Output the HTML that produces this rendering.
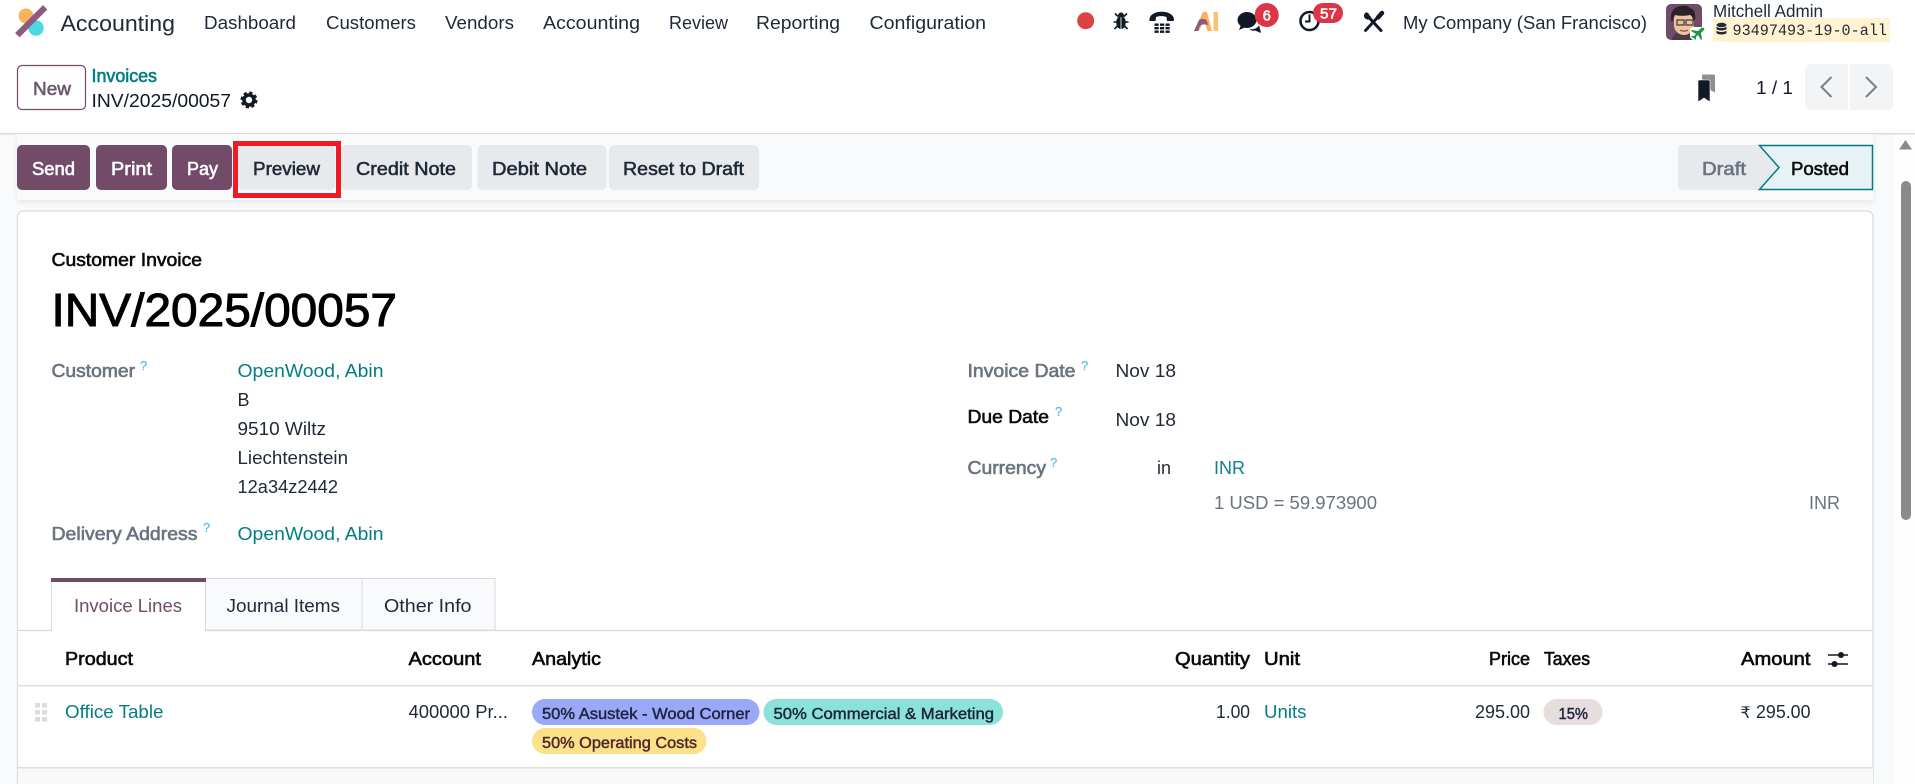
<!DOCTYPE html>
<html lang="en">
<head>
<meta charset="utf-8">
<title>INV/2025/00057</title>
<style>
html,body{margin:0;padding:0;width:1915px;height:784px;overflow:hidden;background:#fff}
svg{display:block}
text{font-family:"Liberation Sans","DejaVu Sans",sans-serif;font-size:18px;fill:currentColor;color:#1f2937}
.nav{font-size:18.5px;color:#1f2937}
.b{stroke:currentColor;stroke-width:.6}
.teal{color:#017e84}
.lab{color:#6b7280;stroke:currentColor;stroke-width:.6}
.q{font-size:13px;color:#5fb8e8;stroke:currentColor;stroke-width:.2}
.btn{color:#fff;stroke:currentColor;stroke-width:.6}
.sec{color:#1f2937;stroke:currentColor;stroke-width:.55}
.th{color:#0b0b0b;stroke:currentColor;stroke-width:.6}
.tag{font-size:16px;color:#1f2540;stroke:currentColor;stroke-width:.45}
</style>
</head>
<body>
<svg width="1915" height="784" viewBox="0 0 1915 784" xmlns="http://www.w3.org/2000/svg">
<defs>
<filter id="sh" x="-2%" y="-20%" width="104%" height="150%"><feDropShadow dx="0" dy="2" stdDeviation="3" flood-color="#000" flood-opacity=".08"/></filter>
</defs>

<!-- backgrounds -->
<rect x="0" y="0" width="1915" height="784" fill="#fff"/>
<rect x="0" y="134" width="1895" height="650" fill="#f9fafb"/>
<rect x="1895" y="134" width="20" height="650" fill="#fefefe"/>
<rect x="0" y="133" width="1915" height="1.5" fill="#d8dadd"/>

<!-- logo -->
<circle cx="26" cy="16" r="7.5" fill="#f9b35c"/>
<circle cx="36" cy="28" r="7.7" fill="#4dd8e6"/>
<path d="M19.500 33 L43 9.500" stroke="#8c5c80" stroke-width="6.200" stroke-linecap="square"/>

<!-- nav -->
<text x="60.500" y="31" textLength="114.500" lengthAdjust="spacingAndGlyphs" style="font-size:22.500px">Accounting</text>
<text class="nav" x="204" y="29" textLength="92" lengthAdjust="spacingAndGlyphs">Dashboard</text>
<text class="nav" x="326" y="29" textLength="90" lengthAdjust="spacingAndGlyphs">Customers</text>
<text class="nav" x="445" y="29" textLength="69" lengthAdjust="spacingAndGlyphs">Vendors</text>
<text class="nav" x="543" y="29" textLength="97" lengthAdjust="spacingAndGlyphs">Accounting</text>
<text class="nav" x="669" y="29" textLength="59" lengthAdjust="spacingAndGlyphs">Review</text>
<text class="nav" x="756" y="29" textLength="84" lengthAdjust="spacingAndGlyphs">Reporting</text>
<text class="nav" x="869.500" y="29" textLength="116.500" lengthAdjust="spacingAndGlyphs">Configuration</text>

<!-- systray -->
<circle cx="1085.700" cy="20.700" r="8.500" fill="#dc4343"/>
<!-- bug -->
<g fill="#111827" stroke="#111827">
<ellipse cx="1121" cy="22.500" rx="4.800" ry="6.500" stroke="none"/>
<circle cx="1121" cy="15.500" r="3" stroke="none"/>
<path d="M1115 13.500l3 3M1127 13.500l-3 3M1113.500 22h4M1128.500 22h-4M1114.500 29l3-3M1127.500 29l-3-3" fill="none" stroke-width="1.600"/>
<path d="M1121 17v12" stroke="#fff" stroke-width=".8"/>
</g>
<!-- phone -->
<path d="M1149.500 20c-.5-11 25-11 24.500 0l-.5 1h-6.500l-.5-4c-3-1.200-7.500-1.200-10.500 0l-.5 4h-6z" fill="#111827"/>
<g fill="#111827">
<rect x="1154.500" y="23.500" width="4.200" height="2.400"/><rect x="1160" y="23.500" width="4.200" height="2.400"/><rect x="1165.500" y="23.500" width="4.200" height="2.400"/>
<rect x="1154.500" y="27" width="4.200" height="2.400"/><rect x="1160" y="27" width="4.200" height="2.400"/><rect x="1165.500" y="27" width="4.200" height="2.400"/>
<rect x="1154.500" y="30.500" width="4.200" height="2.400"/><rect x="1160" y="30.500" width="4.200" height="2.400"/><rect x="1165.500" y="30.500" width="4.200" height="2.400"/>
</g>
<!-- AI -->
<path d="M1194 31l9-19h4l5 19h-4.500l-3.500-11-5 11z" fill="#f9b35c"/>
<path d="M1194 31l5-11c3-2 7-1 8 1l1 4c-3-1-6-1-8 1l-2 5z" fill="#8c5c80"/>
<rect x="1213.500" y="12" width="4.500" height="19" fill="#fbc26e"/>
<!-- chat -->
<ellipse cx="1247" cy="20" rx="9.500" ry="8" fill="#111827"/>
<path d="M1241 25l-2 5 7-3z" fill="#111827"/>
<path d="M1249 29c5 1 9-1 10-4l2 8-6-2.500c-2 .5-4 0-6-1.500z" fill="#111827"/>
<circle cx="1266.700" cy="15" r="12" fill="#dc3545"/>
<text x="1262.700" y="20.500" class="b" style="font-size:14.500px;color:#fff">6</text>
<!-- clock -->
<circle cx="1309.500" cy="21" r="9" fill="none" stroke="#111827" stroke-width="2.600"/>
<path d="M1309.500 14.500V21.500H1305" fill="none" stroke="#111827" stroke-width="2"/>
<rect x="1313" y="3" width="30" height="20" rx="10" fill="#dc3545"/>
<text x="1320" y="18.500" class="b" textLength="17" lengthAdjust="spacingAndGlyphs" style="font-size:14.500px;color:#fff">57</text>
<!-- tools -->
<path d="M1377 18l-11.500 12.500" stroke="#111827" stroke-width="2.800" stroke-linecap="round"/>
<path d="M1378 17.500l4-4.500" stroke="#111827" stroke-width="4.500" stroke-linecap="round"/>
<path d="M1369 17.500l12 13" stroke="#111827" stroke-width="3" stroke-linecap="round"/>
<path d="M1366.500 12.500c-2 .8-2.800 3.200-1.800 5 1 1.600 3 2.200 4.600 1.500l1-2.500-2-2 .5-.5z" fill="#111827" stroke="#111827" stroke-width=".6"/>

<text class="nav" x="1403" y="29" textLength="244" lengthAdjust="spacingAndGlyphs">My Company (San Francisco)</text>

<!-- avatar -->
<rect x="1666" y="4" width="36" height="36" rx="5" fill="#6f4d68"/>
<path d="M1672 40c0-5 4-7 8-8l10 0c4 1 8 3 8 8z" fill="#4a3a4a"/>
<path d="M1674 20c0-7 4-10 10-10s10 3 10 10v5c0 6-5 10-10 10s-10-4-10-10z" fill="#edc3a0"/>
<path d="M1671 21c-1-9 3-15 11-15 4-1 6 0 8 2 4 1 6 5 5 12l-2 1c0-3-1-5-3-6-5 1-11 1-15 0-1 1-2 3-2 6z" fill="#2a2226"/>
<rect x="1677" y="20" width="7" height="5" fill="none" stroke="#444" stroke-width="1.300"/>
<rect x="1686" y="20" width="7" height="5" fill="none" stroke="#444" stroke-width="1.300"/>
<path d="M1680 30c2 1.500 6 1.500 8 0" stroke="#8a4a40" stroke-width="1.200" fill="none"/>
<rect x="1690" y="27" width="15" height="13" rx="4" fill="#fff"/>
<path d="M1704 28c-1-1-3 0-4 1l-2 2-6-1-1 1 5 3-2 2-2 0-1 1 3 1 1 2 1-1 0-2 2-2 3 5 1-1-1-6 2-2c1-1 2-2 1-3z" fill="#1d9a3f"/>

<text x="1713" y="17" textLength="110" lengthAdjust="spacingAndGlyphs" style="font-size:17.500px">Mitchell Admin</text>
<rect x="1713" y="18" width="177" height="24" fill="#fff3d1"/>
<g fill="#1f2937">
<ellipse cx="1721.500" cy="25" rx="5" ry="2.200"/>
<path d="M1716.500 26.500c1.500 2 8.500 2 10 0v2.500c-1.500 2-8.500 2-10 0zM1716.500 30.500c1.500 2 8.500 2 10 0v2.500c-1.500 2-8.500 2-10 0z"/>
</g>
<text x="1732.500" y="35" textLength="154.500" lengthAdjust="spacingAndGlyphs" style="font-family:'Liberation Mono',monospace;font-size:16px">93497493-19-0-all</text>

<!-- control panel -->
<rect x="17.500" y="65.500" width="68" height="44" rx="4.500" fill="#fff" stroke="#714b67" stroke-width="1.200"/>
<text x="33" y="95" class="b" textLength="38" lengthAdjust="spacingAndGlyphs" style="color:#6b5a6c">New</text>
<text x="91.500" y="82" class="b teal" textLength="65.500" lengthAdjust="spacingAndGlyphs">Invoices</text>
<text x="91.500" y="107" textLength="139.500" lengthAdjust="spacingAndGlyphs" style="font-size:18.500px;color:#111827">INV/2025/00057</text>
<circle cx="249" cy="100" r="5" fill="none" stroke="#111827" stroke-width="3.600"/>
<circle cx="249" cy="100" r="7.300" fill="none" stroke="#111827" stroke-width="2.400" stroke-dasharray="3.200 2.530"/>

<path d="M1702 79v-3.500c0-.5.500-1 1-1h11c.5 0 1 .5 1 1v17l-4-2z" fill="#8f8f8f"/>
<path d="M1698 81.500c0-1 .5-1.500 1.500-1.500h9c1 0 1.500.5 1.500 1.500V102l-6-4-6 4z" fill="#111827" stroke="#fff" stroke-width=".6"/>
<text x="1756" y="94" textLength="37" lengthAdjust="spacingAndGlyphs" style="font-size:18.500px;color:#111827">1 / 1</text>
<path d="M1805 70a6 6 0 0 1 6-6h37v46h-37a6 6 0 0 1-6-6z" fill="#f3f4f6"/>
<path d="M1850 64h37a6 6 0 0 1 6 6v34a6 6 0 0 1-6 6h-37z" fill="#f3f4f6"/>
<path d="M1831.500 77l-10 10 10 10" fill="none" stroke="#7b8088" stroke-width="2"/>
<path d="M1866 77l10 10-10 10" fill="none" stroke="#7b8088" stroke-width="2"/>

<!-- action bar -->
<rect x="17" y="134" width="1856.500" height="66" fill="#f9fafb" filter="url(#sh)"/>
<rect x="17" y="145" width="73" height="45" rx="5" fill="#714b67"/>
<rect x="96" y="145" width="71" height="45" rx="5" fill="#714b67"/>
<rect x="172" y="145" width="60" height="45" rx="5" fill="#714b67"/>
<rect x="238" y="145" width="97" height="45" rx="5" fill="#e7e9ed"/>
<rect x="341" y="145" width="131" height="45" rx="5" fill="#e7e9ed"/>
<rect x="477.500" y="145" width="129" height="45" rx="5" fill="#e7e9ed"/>
<rect x="609" y="145" width="150" height="45" rx="5" fill="#e7e9ed"/>
<text class="btn" x="32" y="175" textLength="43" lengthAdjust="spacingAndGlyphs">Send</text>
<text class="btn" x="111" y="175" textLength="41" lengthAdjust="spacingAndGlyphs">Print</text>
<text class="btn" x="187" y="175" textLength="31" lengthAdjust="spacingAndGlyphs">Pay</text>
<text class="sec" x="253" y="175" textLength="67" lengthAdjust="spacingAndGlyphs">Preview</text>
<text class="sec" x="356" y="175" textLength="100" lengthAdjust="spacingAndGlyphs">Credit Note</text>
<text class="sec" x="492" y="175" textLength="95" lengthAdjust="spacingAndGlyphs">Debit Note</text>
<text class="sec" x="623" y="175" textLength="121" lengthAdjust="spacingAndGlyphs">Reset to Draft</text>
<rect x="235.500" y="143.500" width="103" height="52" fill="none" stroke="#ed1c24" stroke-width="5"/>

<!-- status -->
<path d="M1682 145h77l20 22.500-20 22.500h-77a4 4 0 0 1-4-4v-37a4 4 0 0 1 4-4z" fill="#e7e9ed"/>
<path d="M1759.500 145.500H1872.500V189.500H1759.500L1779 167.500z" fill="#e6f2f3" stroke="#017e84" stroke-width="1.500"/>
<text x="1702" y="175" class="b" textLength="44" lengthAdjust="spacingAndGlyphs" style="color:#6b7280">Draft</text>
<text x="1791" y="175" class="b" textLength="58" lengthAdjust="spacingAndGlyphs" style="color:#0b0b0b">Posted</text>

<!-- scrollbar -->
<path d="M1899 149.500l6.500-9.500 6.500 9.500z" fill="#8a8a8a"/>
<rect x="1901" y="181" width="10" height="339" rx="5" fill="#8a8a8a"/>

<!-- card -->
<path d="M17.500 784V217a6 6 0 0 1 6-6H1867a6 6 0 0 1 6 6V784z" fill="#fff" stroke="#d8dadd" stroke-width="1.200"/>

<text x="51.500" y="266" class="b" textLength="150.500" lengthAdjust="spacingAndGlyphs" style="color:#0b0b0b">Customer Invoice</text>
<text x="51.500" y="326" textLength="345.500" lengthAdjust="spacingAndGlyphs" style="font-size:46px;color:#000;stroke:#000;stroke-width:1">INV/2025/00057</text>

<text class="lab" x="51.500" y="377" textLength="83.500" lengthAdjust="spacingAndGlyphs">Customer</text>
<text class="q" x="140" y="370">?</text>
<text class="teal" x="237.500" y="377" textLength="146" lengthAdjust="spacingAndGlyphs">OpenWood, Abin</text>
<text x="237.500" y="406">B</text>
<text x="237.500" y="435" textLength="88.500" lengthAdjust="spacingAndGlyphs">9510 Wiltz</text>
<text x="237.500" y="464" textLength="110.500" lengthAdjust="spacingAndGlyphs">Liechtenstein</text>
<text x="237.500" y="493" textLength="100.500" lengthAdjust="spacingAndGlyphs">12a34z2442</text>
<text class="lab" x="51.500" y="540" textLength="146" lengthAdjust="spacingAndGlyphs">Delivery Address</text>
<text class="q" x="203" y="532">?</text>
<text class="teal" x="237.500" y="540" textLength="146" lengthAdjust="spacingAndGlyphs">OpenWood, Abin</text>

<text class="lab" x="967.500" y="377" textLength="108" lengthAdjust="spacingAndGlyphs">Invoice Date</text>
<text class="q" x="1081" y="370">?</text>
<text x="1115.500" y="377" textLength="60.500" lengthAdjust="spacingAndGlyphs">Nov 18</text>
<text class="b" x="967.500" y="423" textLength="81.500" lengthAdjust="spacingAndGlyphs" style="color:#0b0b0b">Due Date</text>
<text class="q" x="1055" y="416">?</text>
<text x="1115.500" y="426" textLength="60.500" lengthAdjust="spacingAndGlyphs">Nov 18</text>
<text class="lab" x="967.500" y="474" textLength="78.500" lengthAdjust="spacingAndGlyphs">Currency</text>
<text class="q" x="1050" y="467">?</text>
<text x="1157" y="474" textLength="14" lengthAdjust="spacingAndGlyphs">in</text>
<text x="1214" y="474" textLength="31" lengthAdjust="spacingAndGlyphs" style="color:#10808f">INR</text>
<text x="1214" y="509" textLength="163" lengthAdjust="spacingAndGlyphs" style="color:#6b7280">1 USD = 59.973900</text>
<text x="1809" y="509" textLength="31" lengthAdjust="spacingAndGlyphs" style="color:#6b7280">INR</text>

<!-- tabs -->
<path d="M205.500 578.500H495V630H205.500z" fill="#f9fafb" stroke="#d8dadd"/>
<path d="M362 578.500V630" stroke="#d8dadd"/>
<path d="M17.500 630.500H51.500M205.500 630.500H1873" stroke="#d8dadd" stroke-width="1.300"/>
<path d="M51.500 582V631M205.500 582V631" stroke="#d8dadd" stroke-width="1"/>
<rect x="51" y="578" width="155" height="4" fill="#714b67"/>
<text x="74" y="612" textLength="108" lengthAdjust="spacingAndGlyphs" style="color:#714b67">Invoice Lines</text>
<text x="226.500" y="612" textLength="113.500" lengthAdjust="spacingAndGlyphs">Journal Items</text>
<text x="384" y="612" textLength="87.500" lengthAdjust="spacingAndGlyphs">Other Info</text>

<!-- table header -->
<text class="th" x="65" y="665" textLength="68" lengthAdjust="spacingAndGlyphs">Product</text>
<text class="th" x="408.500" y="665" textLength="72.500" lengthAdjust="spacingAndGlyphs">Account</text>
<text class="th" x="532" y="665" textLength="69" lengthAdjust="spacingAndGlyphs">Analytic</text>
<text class="th" x="1175" y="665" textLength="75" lengthAdjust="spacingAndGlyphs">Quantity</text>
<text class="th" x="1264" y="665" textLength="36" lengthAdjust="spacingAndGlyphs">Unit</text>
<text class="th" x="1489" y="665" textLength="41" lengthAdjust="spacingAndGlyphs">Price</text>
<text class="th" x="1544" y="665" textLength="46" lengthAdjust="spacingAndGlyphs">Taxes</text>
<text class="th" x="1741" y="665" textLength="69.500" lengthAdjust="spacingAndGlyphs">Amount</text>
<path d="M1828 655H1848M1828 664H1848" stroke="#111827" stroke-width="1.500"/>
<circle cx="1841" cy="655" r="3" fill="#111827"/><circle cx="1834.500" cy="664" r="3" fill="#111827"/>
<rect x="18" y="685" width="1855" height="1.500" fill="#dcdde0"/>

<!-- row -->
<g fill="#dcdcdc">
<rect x="35" y="703" width="5" height="4.500"/><rect x="42" y="703" width="5" height="4.500"/>
<rect x="35" y="710" width="5" height="4.500"/><rect x="42" y="710" width="5" height="4.500"/>
<rect x="35" y="717" width="5" height="4.500"/><rect x="42" y="717" width="5" height="4.500"/>
</g>
<text class="teal" x="65" y="718" textLength="98.500" lengthAdjust="spacingAndGlyphs">Office Table</text>
<text x="408.500" y="718" textLength="99.500" lengthAdjust="spacingAndGlyphs">400000 Pr...</text>

<rect x="532" y="699" width="227.500" height="26" rx="13" fill="#9aa9f7"/>
<text class="tag" x="542" y="719" textLength="208" lengthAdjust="spacingAndGlyphs">50% Asustek - Wood Corner</text>
<rect x="763.500" y="699" width="239.500" height="26" rx="13" fill="#8ae2d9"/>
<text class="tag" x="773.500" y="719" textLength="220.500" lengthAdjust="spacingAndGlyphs">50% Commercial &amp; Marketing</text>
<rect x="532" y="728" width="174.500" height="26" rx="13" fill="#fde08a"/>
<text class="tag" x="542" y="748" textLength="155" lengthAdjust="spacingAndGlyphs" style="color:#4a2a2a">50% Operating Costs</text>

<text x="1216" y="718" textLength="34" lengthAdjust="spacingAndGlyphs">1.00</text>
<text class="teal" x="1264" y="718" textLength="42.500" lengthAdjust="spacingAndGlyphs">Units</text>
<text x="1475" y="718" textLength="55" lengthAdjust="spacingAndGlyphs">295.00</text>
<rect x="1543.500" y="699" width="59" height="26" rx="13" fill="#e6dddd"/>
<text class="tag" x="1558.500" y="719" textLength="29.500" lengthAdjust="spacingAndGlyphs">15%</text>
<text x="1740.500" y="718" style="font-family:'DejaVu Sans',sans-serif;font-size:16px">₹</text>
<text x="1756" y="718" textLength="54.500" lengthAdjust="spacingAndGlyphs">295.00</text>

<rect x="18" y="767" width="1855" height="1.500" fill="#dcdde0"/>
<rect x="18" y="768.500" width="1855" height="15.500" fill="#f9f9f9"/>
</svg>
</body>
</html>
